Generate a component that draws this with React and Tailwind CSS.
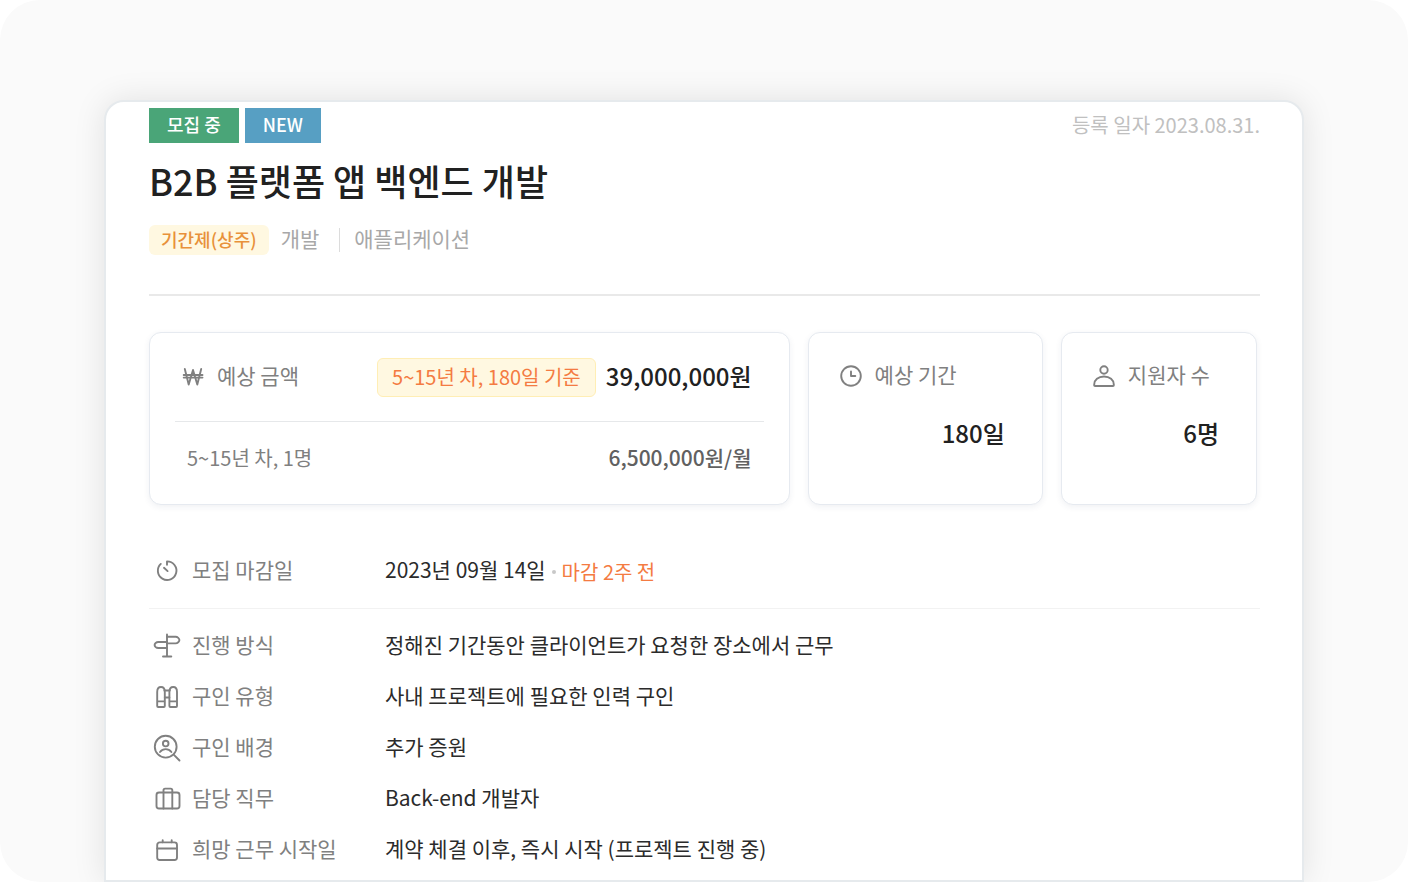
import React from "react";

/* ======================
   ICONS
====================== */
const Icon = ({ children }) => (
  <svg
    viewBox="0 0 28 28"
    fill="none"
    stroke="currentColor"
    strokeWidth="1.9"
    strokeLinecap="round"
    strokeLinejoin="round"
    aria-hidden="true"
    className="w-7 h-7 shrink-0 text-[#808080]"
  >
    {children}
  </svg>
);

const WonIcon = () => (
  <Icon>
    <path d="M5.8 6l3.9 15.5L14 7l4.3 14.5L22.2 6M4.7 12h18.8M4.7 14.6h18.8" />
  </Icon>
);

const ClockIcon = () => (
  <Icon>
    <circle cx="14" cy="14" r="9.8" />
    <path d="M14 9.5V14h4.3" />
  </Icon>
);

const UserIcon = () => (
  <Icon>
    <circle cx="14" cy="8" r="3.7" />
    <path d="M4.2 23.3v-.8c0-4.5 4-8 9.8-8s9.8 3.5 9.8 8v.8c0 .5-.3.7-.8.7H5c-.5 0-.8-.2-.8-.7z" />
  </Icon>
);

const TimerIcon = () => (
  <Icon>
    <path d="M14 7.7V4.4a9.3 9.3 0 1 1-6.2 2.5" />
    <path d="M11 10.8l3.6 3.3" />
  </Icon>
);

const SignpostIcon = () => (
  <Icon>
    <path d="M14 2.5v22M10 24.5h8.3" />
    <path d="M14 4.8h8.6c2 0 3.8 1.8 3.8 3.3s-1.8 3.3-3.8 3.3H14" />
    <path d="M14 10H5.2c-2 0-3.6 1.6-3.6 3s1.6 3 3.6 3H14" />
  </Icon>
);

const BinocularsIcon = () => (
  <Icon>
    <path d="M4.2 18.4V9c0-3 1.5-5 3.8-5s3.8 2 3.8 5v14c0 .6-.4 1-1 1H5.2c-.6 0-1-.4-1-1v-4.6zM4.2 18.4h7.6" />
    <path d="M16.4 18.4V9c0-3 1.5-5 3.8-5S24 6 24 9v14c0 .6-.4 1-1 1h-5.6c-.6 0-1-.4-1-1v-4.6zM16.4 18.4H24" />
    <path d="M11.4 7.5h5.4M11.8 14.5h4.6" />
  </Icon>
);

const SearchUserIcon = () => (
  <Icon>
    <circle cx="12.7" cy="12.7" r="10.9" />
    <circle cx="12.7" cy="9.6" r="2.8" />
    <path d="M7 18c1.5-2 3.5-2.9 5.7-2.9s4.2.9 5.7 2.9M20.7 20.7l5.8 5.8" />
  </Icon>
);

const BriefcaseIcon = () => (
  <Icon>
    <rect x="3.5" y="7.5" width="23" height="16" rx="2.5" />
    <path d="M10.5 23.5V5.2c0-1 .6-1.6 1.6-1.6h5.6c1 0 1.6.6 1.6 1.6v18.3" />
  </Icon>
);

const CalendarIcon = () => (
  <Icon>
    <rect x="4.2" y="6.4" width="19.8" height="17.6" rx="2.5" />
    <path d="M4.2 12.5H24M9.7 4.3v2M18.7 4.3v2" />
  </Icon>
);

/* ======================
   DATA
====================== */
const DETAILS = [
  { icon: SignpostIcon, label: "진행 방식", value: "정해진 기간동안 클라이언트가 요청한 장소에서 근무" },
  { icon: BinocularsIcon, label: "구인 유형", value: "사내 프로젝트에 필요한 인력 구인" },
  { icon: SearchUserIcon, label: "구인 배경", value: "추가 증원" },
  { icon: BriefcaseIcon, label: "담당 직무", value: "Back-end 개발자" },
  { icon: CalendarIcon, label: "희망 근무 시작일", value: "계약 체결 이후, 즉시 시작 (프로젝트 진행 중)" },
];

const STATS = [
  { icon: ClockIcon, label: "예상 기간", value: "180일" },
  { icon: UserIcon, label: "지원자 수", value: "6명" },
];

const BOX =
  "rounded-xl border border-[#e6eaf0] bg-white shadow-[0_2px_6px_rgba(40,60,100,0.07)]";

const DetailLabel = ({ icon: RowIcon, label }) => (
  <dt className="flex items-center gap-[11px] w-[236px] pl-1 shrink-0 text-[#808080]">
    <RowIcon />
    <span className="pb-1">{label}</span>
  </dt>
);

const App = () => {
  return (
    <div className="min-h-screen bg-white font-['Noto_Sans_CJK_KR',sans-serif]">
      <div className="min-h-screen flex flex-col bg-[#fafafa] rounded-[40px] pt-[100px] px-[104px] overflow-hidden">
        <main className="grow rounded-t-[20px] border-2 border-[#e6eaed] bg-white pl-[43px] pr-[42px] pt-[6px] pb-[3px] shadow-[0_0_32px_rgba(0,0,0,0.1)]">

          {/* HEADER */}
          <div className="flex items-center justify-between">
            <div className="flex gap-[6px] text-[18px] font-medium leading-[33px] text-white">
              <span className="bg-[#4aa578] px-[18px] pb-[2px]">모집 중</span>
              <span className="bg-[#579fc3] px-[18px] pb-[2px]">NEW</span>
            </div>
            <span className="pb-[2px] text-[20px] leading-[33px] text-[#c0c0c0]">
              등록 일자 2023.08.31.
            </span>
          </div>

          <h1 className="mt-[10px] text-[36px] font-medium leading-[54px] text-[#212121]">
            B2B 플랫폼 앱 백엔드 개발
          </h1>

          <div className="mt-[18px] flex items-center text-[21px] text-[#a8a8a8]">
            <span className="mr-3 rounded-md bg-[#fff8e1] px-3 pb-[2px] text-[18px] font-medium leading-[28px] text-[#e8913a]">
              기간제(상주)
            </span>
            <span className="pb-1 leading-[26px]">개발</span>
            <span className="ml-5 mr-[14px] h-6 w-px bg-[#dcdcdc]" />
            <span className="pb-1 leading-[26px]">애플리케이션</span>
          </div>

          <hr className="mt-[39px] border-t-2 border-[#e9e9e9]" />

          {/* SUMMARY */}
          <section className="mt-9 grid grid-cols-[640fr_235fr_196fr] gap-[18px] pr-[3px]">
            <div className={`${BOX} px-[25px] pb-[9px]`}>
              <div className="flex items-center h-[88px] pl-1 pr-3">
                <WonIcon />
                <span className="ml-[10px] pb-[2px] text-[21px] text-[#808080]">예상 금액</span>
                <span className="ml-auto mr-[10px] rounded-md border border-[#ffeeb5] bg-[#fff8e1] px-[14px] pb-[2px] text-[20px] leading-[35px] text-[#f47b42]">
                  5~15년 차, 180일 기준
                </span>
                <strong className="pb-[2px] text-[24px] font-medium text-[#212121]">39,000,000원</strong>
              </div>
              <div className="flex items-center justify-between h-[74px] border-t border-[#e6e8ea] px-3 pb-[2px]">
                <span className="text-[20px] text-[#808080]">5~15년 차, 1명</span>
                <span className="text-[21px] font-medium text-[#616161]">6,500,000원/월</span>
              </div>
            </div>

            {STATS.map(({ icon: StatIcon, label, value }) => (
              <div key={label} className={`${BOX} pl-7 pr-[37px] pt-[29px]`}>
                <div className="flex items-center gap-[10px] text-[21px] leading-[24px] text-[#808080]">
                  <StatIcon />
                  <span className="pb-1">{label}</span>
                </div>
                <p className="mt-[25px] text-right text-[24px] font-medium leading-[36px] text-[#212121]">
                  {value}
                </p>
              </div>
            ))}
          </section>

          {/* DETAILS */}
          <dl className="mt-7 text-[21px] leading-[30px] text-[#2b2b2b]">
            <div className="flex items-center h-[76px] border-b border-[#f2f2f2]">
              <DetailLabel icon={TimerIcon} label="모집 마감일" />
              <dd className="flex items-end gap-[6px] pb-[2px]">
                <span className="pb-[2px]">2023년 09월 14일</span>
                <span className="mb-3 h-1 w-1 rounded-full bg-[#c8c8c8]" />
                <span className="text-[20px] leading-[28px] text-[#f47b42]">마감 2주 전</span>
              </dd>
            </div>
            <div className="pt-[11px]">
              {DETAILS.map(({ icon, label, value }) => (
                <div key={label} className="flex items-center h-[51px]">
                  <DetailLabel icon={icon} label={label} />
                  <dd className="pb-1">{value}</dd>
                </div>
              ))}
            </div>
          </dl>
        </main>
      </div>
    </div>
  );
};

export default App;
